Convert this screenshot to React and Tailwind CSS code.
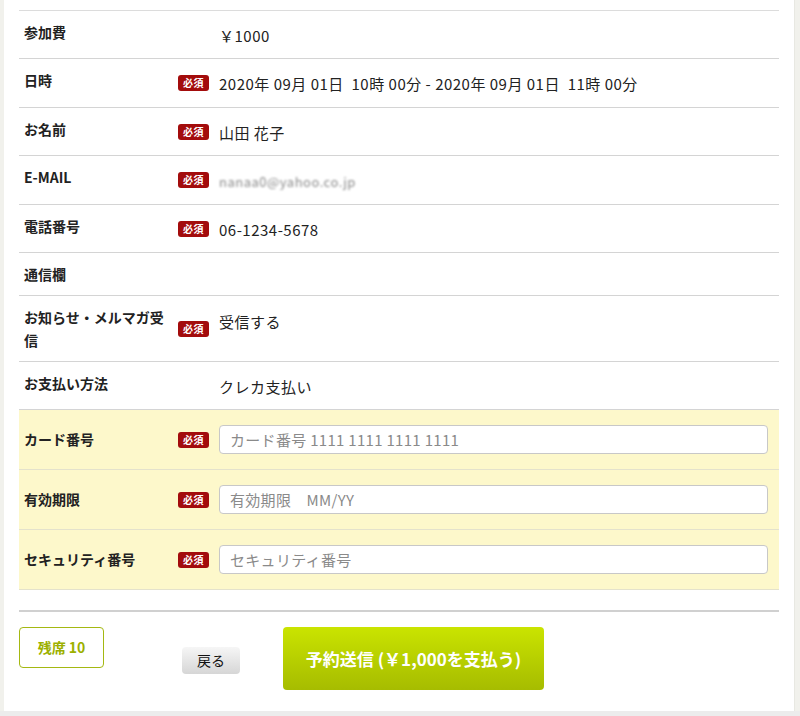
import React from "react";

const font = { fontFamily: '"Noto Sans CJK JP", "Noto Sans", sans-serif' };

function Badge() {
  return (
    <span className="inline-flex items-center justify-center w-[31px] h-[16px] rounded-[3px] bg-[#a30c0c] text-white text-[10px] font-bold leading-none tracking-[0.5px]">
      必須
    </span>
  );
}

function Row({ label, required, children, yellow, valuePad = "pt-[13px] pb-[11px]" }) {
  return (
    <div className={`flex border-b ${yellow ? "bg-[#fdf8cb] border-[#e4e2cc]" : "border-[#d4d4d4]"}`}>
      <div className={`w-[151px] shrink-0 pl-[5px] pr-[4px] text-[14px] font-bold leading-[23px] text-[#222] ${yellow ? "self-center" : "pt-[10px] pb-[9px]"}`}>
        {label}
      </div>
      <div className="w-[43px] shrink-0 flex items-center pl-[8px]">{required && <Badge />}</div>
      <div className={`flex-1 pl-[6px] pr-[11px] ${yellow ? "py-[15px] flex items-center" : valuePad} text-[15px] leading-[23px] tracking-[0.5px] text-[#222]`}>
        {children}
      </div>
    </div>
  );
}

function Input({ placeholder }) {
  return (
    <input
      className="w-full h-[29px] border border-[#c8c8c8] rounded-[4px] bg-white px-[10px] text-[15px] tracking-[0.3px] placeholder:text-[#8a8a8a] outline-none"
      placeholder={placeholder}
      style={font}
    />
  );
}

export default function App() {
  return (
    <div className="w-[800px] h-[716px] flex flex-col bg-[#f1f1ec] overflow-hidden" style={font}>
      <div className="flex-1 ml-[4px] mr-[5px] bg-white px-[15px] pt-[10px] border-r border-[#e8e8e2]">
        <div className="border-t border-[#dcdcdc]">
          <Row label="参加費">￥1000</Row>
          <Row label="日時" required valuePad="pt-[13px] pb-[12px]">
            2020年 09月 01日&nbsp;&nbsp;10時 00分 - 2020年 09月 01日&nbsp;&nbsp;11時 00分
          </Row>
          <Row label="お名前" required>山田 花子</Row>
          <Row label="E-MAIL" required>
            <span className="text-[#8a8a8a] blur-[1.2px] text-[13px] tracking-[0.5px]">nanaa0@yahoo.co.jp</span>
          </Row>
          <Row label="電話番号" required>06-1234-5678</Row>
          <Row label="通信欄" valuePad="py-0"></Row>
          <Row label={<>お知らせ・メルマガ受<br />信</>} required valuePad="pt-[14px]">
            受信する
          </Row>
          <Row label="お支払い方法">クレカ支払い</Row>
          <Row label="カード番号" required yellow>
            <Input placeholder="カード番号 1111 1111 1111 1111" />
          </Row>
          <Row label="有効期限" required yellow>
            <Input placeholder="有効期限　MM/YY" />
          </Row>
          <Row label="セキュリティ番号" required yellow>
            <Input placeholder="セキュリティ番号" />
          </Row>
        </div>
        <div className="mt-[20px] border-t-2 border-[#d0d0d0]"></div>
        <div className="flex items-start pt-[15px]">
          <div className="w-[85px] h-[41px] flex items-center justify-center border border-[#a4b812] rounded-[4px] text-[#9cb000] text-[14px] font-bold">
            残席 10
          </div>
          <button className="ml-[78px] mt-[20px] w-[58px] h-[27px] rounded-[4px] bg-gradient-to-b from-[#f6f6f6] to-[#d6d6d6] text-[14px] text-[#111] flex items-center justify-center">
            戻る
          </button>
          <button className="ml-[43px] w-[261px] h-[63px] rounded-[4px] bg-gradient-to-b from-[#cae400] to-[#a6bc00] text-white text-[17px] font-bold flex items-center justify-center">
            予約送信 (￥1,000を支払う)
          </button>
        </div>
      </div>
      <div className="h-[5px] bg-[#ececec]"></div>
    </div>
  );
}
